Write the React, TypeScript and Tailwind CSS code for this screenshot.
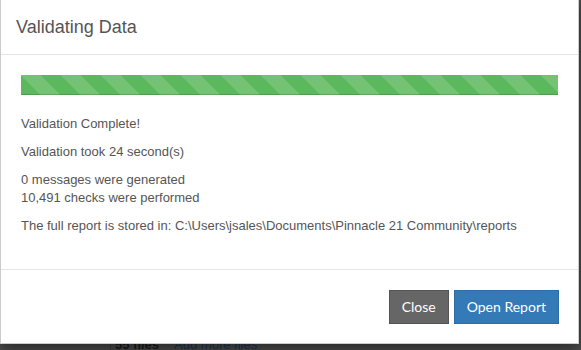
export default function App() {
  const stripes =
    "bg-[#5cb85c] bg-[linear-gradient(45deg,rgba(255,255,255,.15)_25%,transparent_25%,transparent_50%,rgba(255,255,255,.15)_50%,rgba(255,255,255,.15)_75%,transparent_75%,transparent)] bg-[length:40px_40px]";

  return (
    <div className="relative h-[350px] w-[581px] overflow-hidden bg-[#4e4e4e] font-['Liberation_Sans',Arial,sans-serif]">
      {/* page behind the backdrop, mostly hidden */}
      <div className="absolute left-[110px] top-[300px] h-[60px] border-l border-[#3f3f3f]" />
      <div className="absolute left-[115px] top-[336px] flex gap-[15px] text-[13px] leading-[18px]">
        <span className="font-bold text-[#1c1c1c]">55 files</span>
        <span className="text-[#1d3550]">Add more files</span>
      </div>

      {/* modal */}
      <div className="absolute left-0 top-[-1px] flex h-[345px] w-[579px] flex-col border border-[rgba(0,0,0,0.2)] bg-white shadow-[0_5px_15px_rgba(0,0,0,0.5)]">
        <div className="flex h-[55px] items-center border-b border-[#e5e5e5] px-[15px]">
          <h4 className="text-[18px] leading-[26px] text-[#555]">Validating Data</h4>
        </div>

        <div className="px-[20px] pt-[20px] text-[13px] leading-[18px] text-[#555]">
          <div className={`mb-[20px] h-[20px] shadow-[inset_0_-1px_0_rgba(0,0,0,0.15)] ${stripes}`} />
          <p className="mb-[10px]">Validation Complete!</p>
          <p className="mb-[10px]">Validation took 24 second(s)</p>
          <p className="mb-[10px]">
            0 messages were generated
            <br />
            10,491 checks were performed
          </p>
          <p>
            The full report is stored in: C:\Users\jsales\Documents\Pinnacle 21
            Community\reports
          </p>
        </div>

        <div className="mt-auto flex h-[74px] items-center justify-end gap-[5px] border-t border-[#e5e5e5] px-[19px] font-['Lato',sans-serif] text-[14px]">
          <button className="h-[34px] border border-[#555] bg-[#666] px-[12px] text-white">
            Close
          </button>
          <button className="h-[34px] border border-[#2e6da4] bg-[#337ab7] px-[12px] text-white">
            Open Report
          </button>
        </div>
      </div>
    </div>
  );
}
